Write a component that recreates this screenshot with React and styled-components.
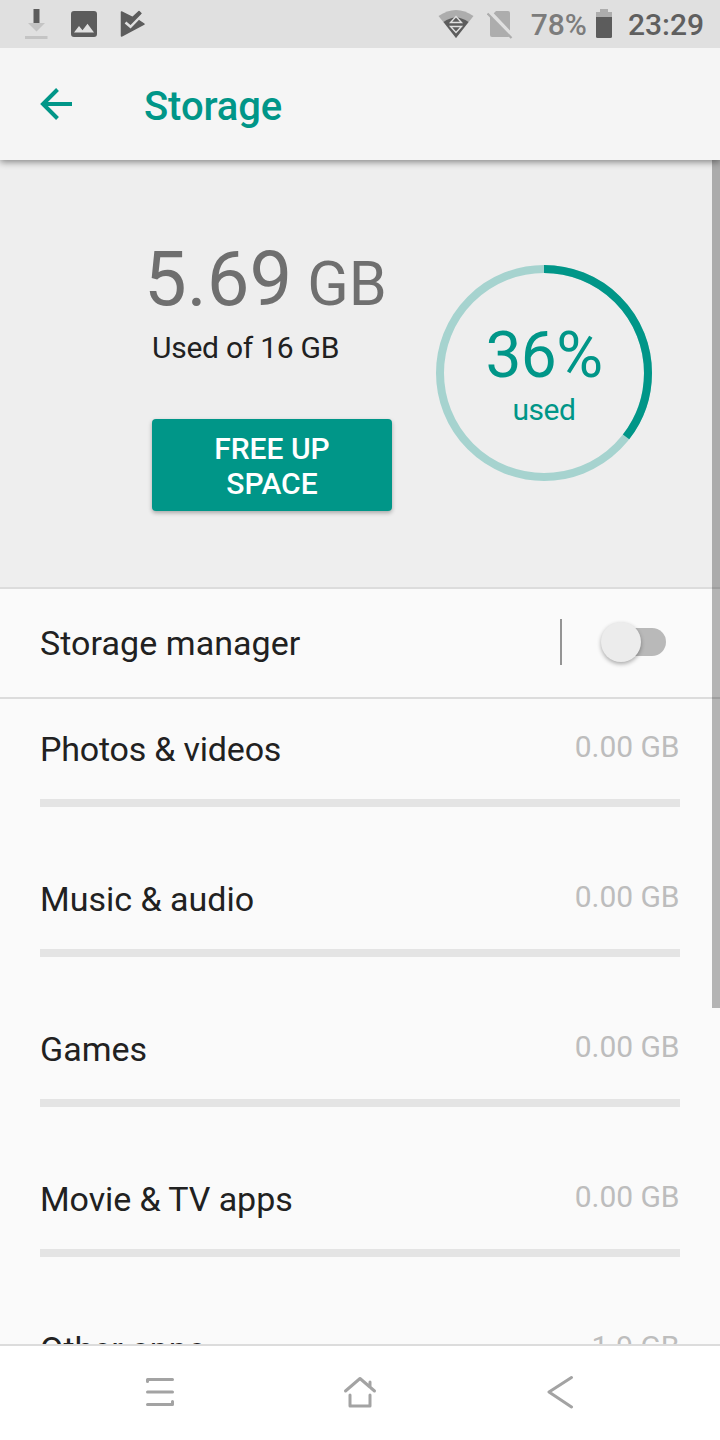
import React from 'react';
import styled, { createGlobalStyle } from 'styled-components';

const GlobalStyle = createGlobalStyle`
    * {
        box-sizing: border-box;
    }
    body {
        margin: 0;
        font-family: Roboto, sans-serif;
        color: #212121;
    }
`;

const Screen = styled.div`
    width: 720px;
    height: 1440px;
    display: flex;
    flex-direction: column;
    overflow: hidden;
    background: #fafafa;
`;

const StatusBar = styled.div`
    flex: none;
    height: 48px;
    padding: 0 16px 0 24px;
    display: flex;
    align-items: center;
    background: #e0e0e0;
    z-index: 2;
`;

const StatusIcon = styled.svg`
    display: block;
    flex: none;
    margin-left: ${(props) => props.$gap || 0}px;
`;

const StatusText = styled.span`
    font-size: 30px;
    line-height: 48px;
    font-weight: 500;
    color: ${(props) => props.$color};
    margin-left: ${(props) => props.$gap}px;
    padding-top: 1px;
`;

const Spacer = styled.div`
    flex: 1;
`;

const AppBar = styled.header`
    flex: none;
    height: 112px;
    padding: 0 40px;
    display: flex;
    align-items: center;
    background: #f5f5f5;
    box-shadow: 0 2px 7px rgba(0, 0, 0, 0.45);
    z-index: 1;
`;

const Title = styled.h1`
    margin: 0 0 0 72px;
    padding-top: 6px;
    font-size: 40px;
    line-height: 48px;
    font-weight: 500;
    letter-spacing: -0.1px;
    color: #009688;
`;

const Content = styled.main`
    position: relative;
    flex: 1;
    min-height: 0;
    overflow: hidden;
`;

const ScrollThumb = styled.div`
    position: absolute;
    top: 0;
    right: 0;
    width: 8px;
    height: 848px;
    background: rgba(0, 0, 0, 0.28);
`;

const Summary = styled.section`
    height: 429px;
    padding: 75px 68px 0 144px;
    display: flex;
    justify-content: space-between;
    background: #eeeeee;
    border-bottom: 2px solid #dcdcdc;
`;

const Usage = styled.div`
    width: 248px;
`;

const Amount = styled.div`
    font-size: 76px;
    line-height: 88px;
    color: #6f6f6f;
    white-space: nowrap;
`;

const Unit = styled.span`
    font-size: 61px;
    white-space: pre;
`;

const Caption = styled.div`
    margin: 2px 0 0 8px;
    font-size: 30px;
    line-height: 36px;
    letter-spacing: -0.25px;
`;

const ActionButton = styled.button`
    display: block;
    width: 240px;
    height: 92px;
    margin: 53px 0 0 8px;
    padding: 2px 50px 0;
    border: 0;
    border-radius: 4px;
    background: #009688;
    box-shadow: 0 2px 4px rgba(0, 0, 0, 0.3);
    color: #fff;
    font: 500 30px/35px Roboto, sans-serif;
    text-transform: uppercase;
`;

const Donut = styled.div`
    display: grid;
    width: 216px;
    height: 216px;
    margin-top: 30px;

    > * {
        grid-area: 1 / 1;
    }
`;

const DonutLabel = styled.div`
    padding-top: 55px;
    text-align: center;
    color: #009688;
`;

const Percent = styled.div`
    font-size: 64px;
    line-height: 72px;
    letter-spacing: -0.6px;
`;

const Used = styled.div`
    font-size: 30px;
    line-height: 36px;
    letter-spacing: -0.5px;
`;

const ManagerRow = styled.section`
    height: 110px;
    padding: 0 54px 2px 40px;
    display: flex;
    align-items: center;
    border-bottom: 2px solid #dcdcdc;
`;

const Label = styled.span`
    font-size: 34px;
    line-height: 40px;
    padding-top: 2px;
    letter-spacing: ${(props) => props.$tracking || 0}px;
    white-space: nowrap;
`;

const Divider = styled.div`
    width: 2px;
    height: 46px;
    margin: 0 39px 0 auto;
    background: #949494;
`;

const Track = styled.div`
    width: 65px;
    height: 28px;
    display: flex;
    align-items: center;
    border-radius: 14px;
    background: linear-gradient(to right, transparent 20px, #b9b9b9 20px);
`;

const Knob = styled.div`
    width: 40px;
    height: 40px;
    border-radius: 50%;
    background: #ececec;
    box-shadow: 0 2px 4px rgba(0, 0, 0, 0.32);
`;

const Category = styled.section`
    height: 150px;
    padding: 28px 40px 0;
`;

const CategoryHead = styled.div`
    height: 72px;
    display: flex;
    justify-content: space-between;
    align-items: flex-start;
`;

const Size = styled.span`
    padding-right: 0.5px;
    font-size: 30px;
    line-height: 40px;
    letter-spacing: -0.05px;
    color: #bdbdbd;
`;

const Bar = styled.div`
    height: 8px;
    background: #e4e4e4;
`;

const NavBar = styled.nav`
    flex: none;
    height: 96px;
    padding: 0 60px 2px;
    display: grid;
    grid-template-columns: repeat(3, 200px);
    place-items: center;
    background: #fff;
    border-top: 2px solid #dcdcdc;
`;

const NavIcon = styled.svg`
    fill: none;
    stroke: #a3a3a3;
    stroke-width: 3;
    stroke-linecap: round;
    stroke-linejoin: round;
`;

const categories = [
    { name: 'Photos & videos', size: '0.00 GB', tracking: -0.2 },
    { name: 'Music & audio', size: '0.00 GB' },
    { name: 'Games', size: '0.00 GB' },
    { name: 'Movie & TV apps', size: '0.00 GB', tracking: -0.08 },
    { name: 'Other apps', size: '1.9 GB' },
];

const RING = 2 * Math.PI * 104;

const Status = () => (
    <StatusBar>
        <StatusIcon width="24" height="48">
            <path d="M9.5 9h6v14h-6z" fill="#5c5c5c" />
            <path d="M4 23h17l-8.500 8.500z M1 36h22.500v3H1z" fill="#c4c4c4" />
        </StatusIcon>
        <StatusIcon width="26" height="48" $gap={23}>
            <path fillRule="evenodd" d="M3 11h20a3 3 0 0 1 3 3v20a3 3 0 0 1-3 3H3a3 3 0 0 1-3-3V14a3 3 0 0 1 3-3zM3 32.500h20l-6.500-8.700-5 6.500-3.500-4.300z" fill="#5c5c5c" />
        </StatusIcon>
        <StatusIcon width="26" height="48" $gap={23}>
            <path d="M1.500 12L12.500 17.500 19 11.500 21 13.500 18 20 24 24 1.500 36z" fill="#5c5c5c" stroke="#5c5c5c" strokeWidth="1.500" strokeLinejoin="round" />
            <path d="M5.500 22.500l5 4.300L22.500 14.500" fill="none" stroke="#e0e0e0" strokeWidth="2.500" />
        </StatusIcon>
        <Spacer />
        <StatusIcon width="36" height="48">
            <path d="M.5 16Q18 4 35.500 16L18 38z" fill="#adadad" />
            <path d="M5.500 22Q18 13 30.500 22L18 38z" fill="#5c5c5c" />
            <path d="M12.500 22.500h11L18 16.500zM12.500 26.500h11L18 32.500z" fill="#5c5c5c" stroke="#e0e0e0" strokeWidth="1.400" />
        </StatusIcon>
        <StatusIcon width="28" height="48" $gap={12.5}>
            <path d="M9 11h12a2 2 0 0 1 2 2v22a2 2 0 0 1-2 2H5a2 2 0 0 1-2-2V17z" fill="#adadad" />
            <path d="M1.500 11L26 37" stroke="#e0e0e0" strokeWidth="4.500" />
            <path d="M.5 13.500L24.500 38" stroke="#adadad" strokeWidth="2.200" />
        </StatusIcon>
        <StatusText $color="#7c7c7c" $gap={16}>78%</StatusText>
        <StatusIcon width="16" height="48" $gap={9}>
            <path d="M4 9h8v3h4v5H0v-5h4z" fill="#adadad" />
            <path d="M0 17h16v19.500a1.500 1.500 0 0 1-1.500 1.500h-13A1.500 1.500 0 0 1 0 36.500z" fill="#5c5c5c" />
        </StatusIcon>
        <StatusText $color="#5f5f5f" $gap={16}>23:29</StatusText>
    </StatusBar>
);

const StorageSummary = () => (
    <Summary>
        <Usage>
            <Amount>5.69<Unit> GB</Unit></Amount>
            <Caption>Used of 16 GB</Caption>
            <ActionButton type="button">Free up space</ActionButton>
        </Usage>
        <Donut>
            <svg width="216" height="216" fill="none" strokeWidth="8">
                <circle cx="108" cy="108" r="104" stroke="#a6d3cf" />
                <circle
                    cx="108"
                    cy="108"
                    r="104"
                    stroke="#009688"
                    strokeDasharray={`${RING * 0.355} ${RING}`}
                    transform="rotate(-90 108 108)"
                />
            </svg>
            <DonutLabel>
                <Percent>36%</Percent>
                <Used>used</Used>
            </DonutLabel>
        </Donut>
    </Summary>
);

const Navigation = () => (
    <NavBar>
        <NavIcon width="30" height="30">
            <path d="M2.500 4.500V2.500H27.500M2.500 15H27.500M2.500 27.500H27.500V24.500" />
        </NavIcon>
        <NavIcon width="34" height="34">
            <path d="M2.500 16L17 3.500 31.500 16M27 12V7M7 20V31H27V20" />
        </NavIcon>
        <NavIcon width="30" height="34">
            <path d="M26.500 2.500L4 17l22.500 15" />
        </NavIcon>
    </NavBar>
);

export default function App() {
    return (
        <Screen>
            <GlobalStyle />
            <Status />
            <AppBar>
                <svg width="32" height="32" fill="none" stroke="#009688" strokeWidth="4">
                    <path d="M32 16H3M17.500 1.500L3 16l14.500 14.500" />
                </svg>
                <Title>Storage</Title>
            </AppBar>
            <Content>
                <StorageSummary />
                <ManagerRow>
                    <Label $tracking={0.06}>Storage manager</Label>
                    <Divider />
                    <Track>
                        <Knob />
                    </Track>
                </ManagerRow>
                {categories.map((item) => (
                    <Category key={item.name}>
                        <CategoryHead>
                            <Label $tracking={item.tracking}>{item.name}</Label>
                            <Size>{item.size}</Size>
                        </CategoryHead>
                        <Bar />
                    </Category>
                ))}
                <ScrollThumb />
            </Content>
            <Navigation />
        </Screen>
    );
}
